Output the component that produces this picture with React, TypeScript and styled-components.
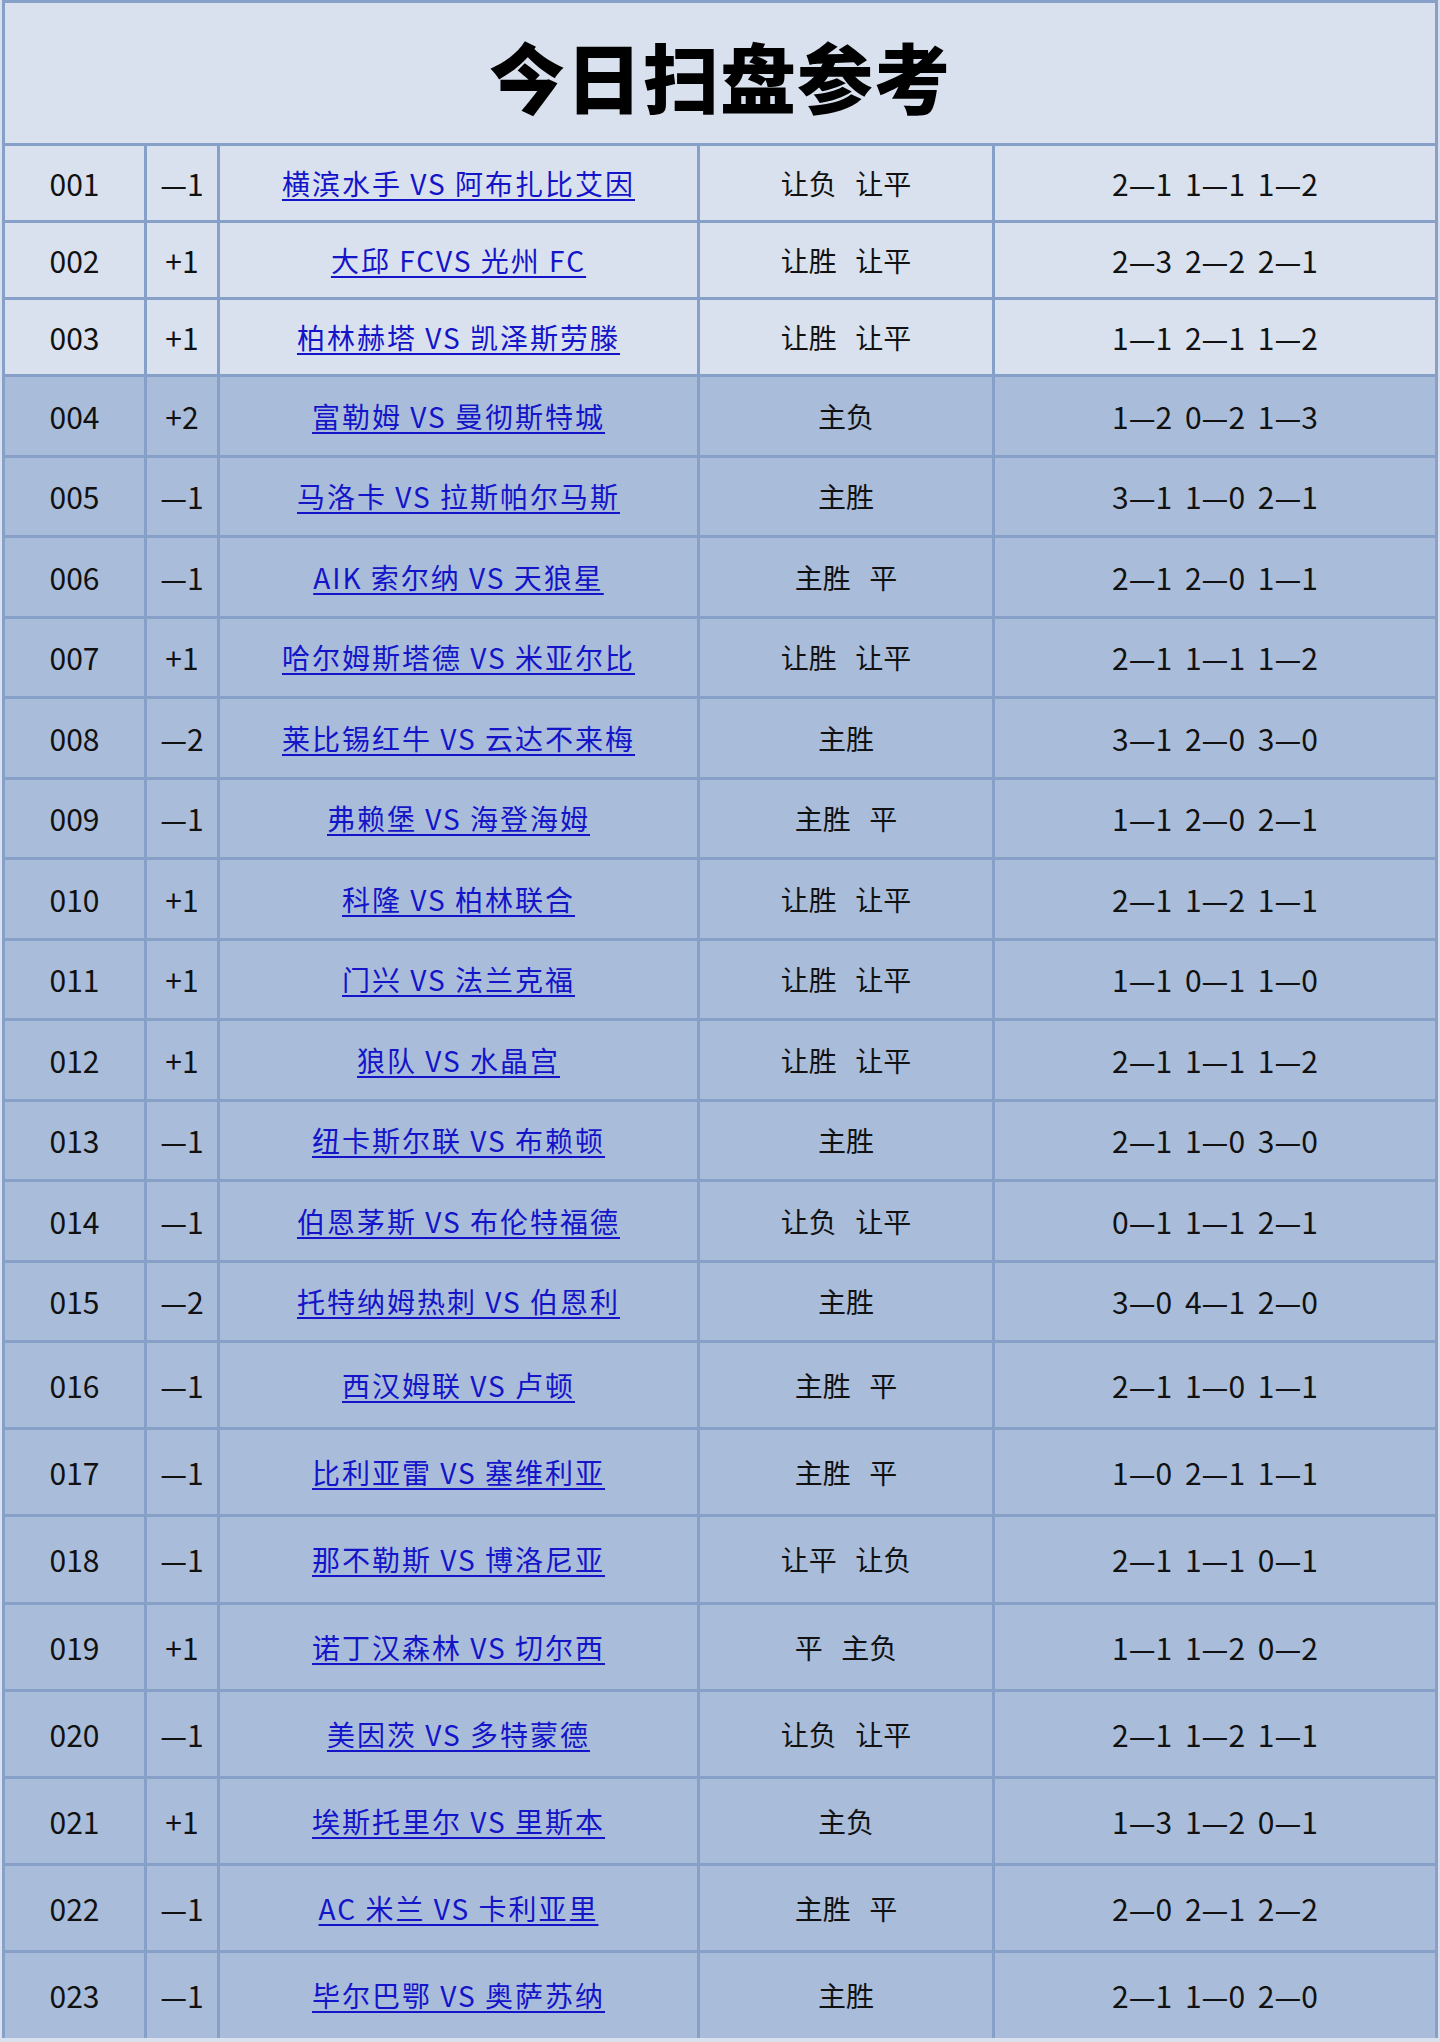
import React, { FC } from 'react';
import styled, { createGlobalStyle } from 'styled-components';

interface Match {
    no: string;
    line: string;
    teams: string;
    pick: string;
    scores: string;
}

const matches: Match[] = [
    { no: '001', line: '—1', teams: '横滨水手 VS 阿布扎比艾因', pick: '让负 让平', scores: '2—1 1—1 1—2' },
    { no: '002', line: '+1', teams: '大邱 FCVS 光州 FC', pick: '让胜 让平', scores: '2—3 2—2 2—1' },
    { no: '003', line: '+1', teams: '柏林赫塔 VS 凯泽斯劳滕', pick: '让胜 让平', scores: '1—1 2—1 1—2' },
    { no: '004', line: '+2', teams: '富勒姆 VS 曼彻斯特城', pick: '主负', scores: '1—2 0—2 1—3' },
    { no: '005', line: '—1', teams: '马洛卡 VS 拉斯帕尔马斯', pick: '主胜', scores: '3—1 1—0 2—1' },
    { no: '006', line: '—1', teams: 'AIK 索尔纳 VS 天狼星', pick: '主胜 平', scores: '2—1 2—0 1—1' },
    { no: '007', line: '+1', teams: '哈尔姆斯塔德 VS 米亚尔比', pick: '让胜 让平', scores: '2—1 1—1 1—2' },
    { no: '008', line: '—2', teams: '莱比锡红牛 VS 云达不来梅', pick: '主胜', scores: '3—1 2—0 3—0' },
    { no: '009', line: '—1', teams: '弗赖堡 VS 海登海姆', pick: '主胜 平', scores: '1—1 2—0 2—1' },
    { no: '010', line: '+1', teams: '科隆 VS 柏林联合', pick: '让胜 让平', scores: '2—1 1—2 1—1' },
    { no: '011', line: '+1', teams: '门兴 VS 法兰克福', pick: '让胜 让平', scores: '1—1 0—1 1—0' },
    { no: '012', line: '+1', teams: '狼队 VS 水晶宫', pick: '让胜 让平', scores: '2—1 1—1 1—2' },
    { no: '013', line: '—1', teams: '纽卡斯尔联 VS 布赖顿', pick: '主胜', scores: '2—1 1—0 3—0' },
    { no: '014', line: '—1', teams: '伯恩茅斯 VS 布伦特福德', pick: '让负 让平', scores: '0—1 1—1 2—1' },
    { no: '015', line: '—2', teams: '托特纳姆热刺 VS 伯恩利', pick: '主胜', scores: '3—0 4—1 2—0' },
    { no: '016', line: '—1', teams: '西汉姆联 VS 卢顿', pick: '主胜 平', scores: '2—1 1—0 1—1' },
    { no: '017', line: '—1', teams: '比利亚雷 VS 塞维利亚', pick: '主胜 平', scores: '1—0 2—1 1—1' },
    { no: '018', line: '—1', teams: '那不勒斯 VS 博洛尼亚', pick: '让平 让负', scores: '2—1 1—1 0—1' },
    { no: '019', line: '+1', teams: '诺丁汉森林 VS 切尔西', pick: '平 主负', scores: '1—1 1—2 0—2' },
    { no: '020', line: '—1', teams: '美因茨 VS 多特蒙德', pick: '让负 让平', scores: '2—1 1—2 1—1' },
    { no: '021', line: '+1', teams: '埃斯托里尔 VS 里斯本', pick: '主负', scores: '1—3 1—2 0—1' },
    { no: '022', line: '—1', teams: 'AC 米兰 VS 卡利亚里', pick: '主胜 平', scores: '2—0 2—1 2—2' },
    { no: '023', line: '—1', teams: '毕尔巴鄂 VS 奥萨苏纳', pick: '主胜', scores: '2—1 1—0 2—0' },
];

// rows 1-3 are light and short, later blocks get taller
const rowHeight = (i: number) => (i < 3 ? 74 : i < 15 ? 77.5 : 84.2);

const App: FC = () => {
    return (
        <>
            <GlobalStyle />
            <Sheet>
                <TitleCell>
                    <h1>今日扫盘参考</h1>
                </TitleCell>
                {matches.map((m, i) => (
                    <Row key={m.no} $h={rowHeight(i)} $light={i < 3}>
                        <Cell>{m.no}</Cell>
                        <Cell>{m.line}</Cell>
                        <Cell>
                            <TeamLink href="#">{m.teams}</TeamLink>
                        </Cell>
                        <Cell className="pick">{m.pick}</Cell>
                        <Cell className="scores">{m.scores}</Cell>
                    </Row>
                ))}
            </Sheet>
        </>
    );
};

const GlobalStyle = createGlobalStyle`
  html, body {
    margin: 0;
    padding: 0;
    background: #d9e1ee;
  }
`;

const Sheet = styled.div`
  width: 1436px;
  margin-left: 2px;
  padding: 3px 3px 0;
  display: flex;
  flex-direction: column;
  gap: 3px;
  background: #87a0c8;
  font-family: "Liberation Sans Narrow", "Noto Sans CJK SC", sans-serif;
  font-stretch: condensed;
  color: #111;
  box-sizing: border-box;
`;

const TitleCell = styled.div`
  height: 140px;
  background: #d9e1ee;
  display: flex;
  align-items: center;
  justify-content: center;

  h1 {
    margin: 4px 0 0;
    font-family: "Noto Sans CJK SC", sans-serif;
    font-size: 76px;
    font-weight: 900;
    letter-spacing: 1px;
    color: #000;
  }
`;

const Row = styled.div<{ $h: number; $light: boolean }>`
  display: grid;
  grid-template-columns: 139px 70px 477px 292px 440px;
  gap: 3px;
  height: ${(p) => p.$h}px;

  & > div {
    background: ${(p) => (p.$light ? '#d9e1ee' : '#a9bddb')};
  }
`;

const Cell = styled.div`
  display: flex;
  align-items: center;
  justify-content: center;
  font-size: 30px;
  white-space: pre;

  &.pick {
    font-family: "Noto Sans CJK SC", sans-serif;
    font-size: 28px;
    word-spacing: 12px;
  }

  &.scores {
    word-spacing: 6px;
  }
`;

const TeamLink = styled.a`
  font-size: 28px;
  color: #1414c8;
  text-decoration: underline;
  text-decoration-thickness: 2px;
  text-underline-offset: 4px;
  letter-spacing: 2px;
`;

export default App;
